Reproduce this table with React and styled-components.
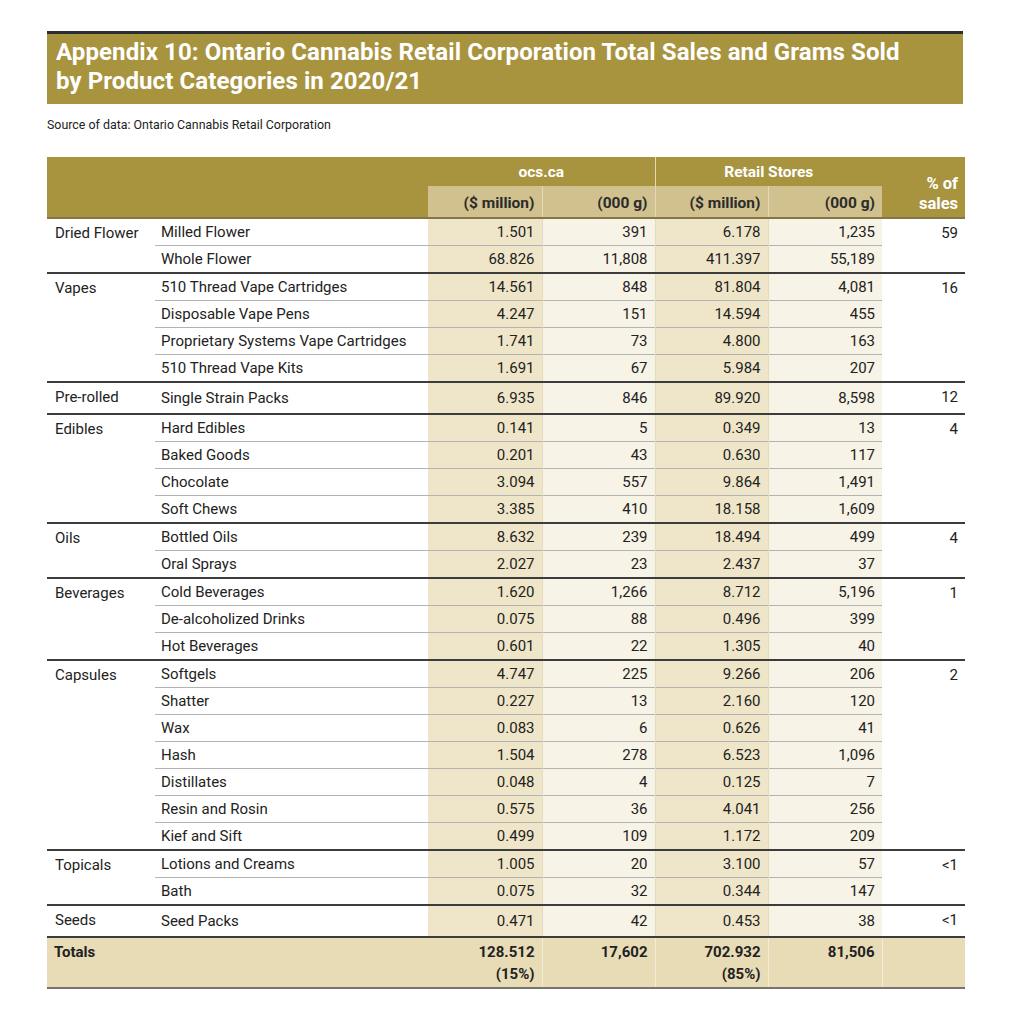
import React from 'react';
import styled, { createGlobalStyle } from 'styled-components';

const GlobalStyle = createGlobalStyle`
  body {
    margin: 0;
    background: #fff;
    font-family: "Roboto", "Liberation Sans", sans-serif;
    color: #222;
  }
`;

const Page = styled.div`
  width: 918px;
  padding: 31px 0 30px 47px;
`;

const TitleBand = styled.div`
  border-top: 3px solid #2b2e30;
  background: #a8943f;
  padding: 4px 9px 8px;
  margin-right: 2px;
  h1 {
    margin: 0;
    color: #fff;
    font-size: 24px;
    line-height: 29px;
    font-weight: 700;
    letter-spacing: 0.1px;
  }
`;

const Source = styled.p`
  margin: 13px 0 24px;
  font-size: 12.4px;
  line-height: 16px;
  color: #222;
`;

const Table = styled.table`
  width: 918px;
  border-collapse: collapse;
  table-layout: fixed;
  font-size: 15px;
`;

const HeadCell = styled.th`
  background: ${(p) => (p.$sub ? '#d0c18f' : '#a8943f')};
  color: ${(p) => (p.$sub ? '#2b2b2b' : '#fff')};
  font-weight: 700;
  font-size: ${(p) => (p.$big ? '16.5px' : '15.5px')};
  height: 29px;
  padding: ${(p) => (p.$big ? '0 7px 3px' : p.$sub ? '2px 7px 0' : '0 7px')};
  text-align: ${(p) => p.$align || 'right'};
  vertical-align: ${(p) => p.$valign || 'middle'};
  line-height: 20px;
  border-left: ${(p) => (p.$divider ? '1px solid #e4d9b6' : 'none')};
  border-bottom: ${(p) => (p.$last ? '2px solid #857648' : 'none')};
`;

const Cell = styled.td`
  height: 26px;
  padding: 0 7px;
  line-height: 20px;
  white-space: nowrap;
  text-align: ${(p) => (p.$num ? 'right' : 'left')};
  vertical-align: ${(p) => (p.$top ? 'top' : 'middle')};
  padding-top: ${(p) => (p.$top ? '4px' : '0')};
  background: ${(p) => p.$bg || 'transparent'};
  border-left: ${(p) => (p.$divider ? '1px solid #e4dabd' : 'none')};
  border-top: ${(p) => (p.$group ? '2px solid #3c3c3c' : p.$inner ? '1px solid #b3b3b3' : 'none')};
`;

const CatCell = styled(Cell)`
  padding-left: 8px;
`;

const ProductCell = styled(Cell)`
  padding-left: 6px;
`;

const TotalCell = styled.td`
  background: #e8dcb7;
  font-weight: 700;
  height: 41px;
  padding: 3px 7px 2px;
  line-height: 22px;
  vertical-align: top;
  text-align: ${(p) => (p.$num ? 'right' : 'left')};
  border-top: 2px solid #3c3c3c;
  border-bottom: 2px solid #77746c;
  border-left: ${(p) => (p.$divider ? '1px solid #f3ecd7' : 'none')};
`;

const MONEY = '#efe6c9';
const GRAMS = '#f7f3e6';

const groups = [
  ['Dried Flower', '59', [
    ['Milled Flower', '1.501', '391', '6.178', '1,235'],
    ['Whole Flower', '68.826', '11,808', '411.397', '55,189'],
  ]],
  ['Vapes', '16', [
    ['510 Thread Vape Cartridges', '14.561', '848', '81.804', '4,081'],
    ['Disposable Vape Pens', '4.247', '151', '14.594', '455'],
    ['Proprietary Systems Vape Cartridges', '1.741', '73', '4.800', '163'],
    ['510 Thread Vape Kits', '1.691', '67', '5.984', '207'],
  ]],
  ['Pre-rolled', '12', [
    ['Single Strain Packs', '6.935', '846', '89.920', '8,598'],
  ]],
  ['Edibles', '4', [
    ['Hard Edibles', '0.141', '5', '0.349', '13'],
    ['Baked Goods', '0.201', '43', '0.630', '117'],
    ['Chocolate', '3.094', '557', '9.864', '1,491'],
    ['Soft Chews', '3.385', '410', '18.158', '1,609'],
  ]],
  ['Oils', '4', [
    ['Bottled Oils', '8.632', '239', '18.494', '499'],
    ['Oral Sprays', '2.027', '23', '2.437', '37'],
  ]],
  ['Beverages', '1', [
    ['Cold Beverages', '1.620', '1,266', '8.712', '5,196'],
    ['De-alcoholized Drinks', '0.075', '88', '0.496', '399'],
    ['Hot Beverages', '0.601', '22', '1.305', '40'],
  ]],
  ['Capsules', '2', [
    ['Softgels', '4.747', '225', '9.266', '206'],
    ['Shatter', '0.227', '13', '2.160', '120'],
    ['Wax', '0.083', '6', '0.626', '41'],
    ['Hash', '1.504', '278', '6.523', '1,096'],
    ['Distillates', '0.048', '4', '0.125', '7'],
    ['Resin and Rosin', '0.575', '36', '4.041', '256'],
    ['Kief and Sift', '0.499', '109', '1.172', '209'],
  ]],
  ['Topicals', '<1', [
    ['Lotions and Creams', '1.005', '20', '3.100', '57'],
    ['Bath', '0.075', '32', '0.344', '147'],
  ]],
  ['Seeds', '<1', [
    ['Seed Packs', '0.471', '42', '0.453', '38'],
  ]],
];

const bgFor = (i) => (i % 2 === 0 ? MONEY : GRAMS);

const GroupRows = ({ name, share, rows, first }) =>
  rows.map((r, i) => {
    const group = i === 0 && !first;
    const inner = i > 0;
    return (
      <tr key={r[0]}>
        {i === 0 && (
          <CatCell rowSpan={rows.length} $top $group={group}>
            {name}
          </CatCell>
        )}
        <ProductCell $group={group} $inner={inner}>{r[0]}</ProductCell>
        {r.slice(1).map((v, j) => (
          <Cell key={j} $num $bg={bgFor(j)} $divider={j > 0} $group={group} $inner={inner}>
            {v}
          </Cell>
        ))}
        {i === 0 && (
          <Cell rowSpan={rows.length} $num $top $group={group}>
            {share}
          </Cell>
        )}
      </tr>
    );
  });

export default function App() {
  return (
    <Page>
      <GlobalStyle />
      <TitleBand>
        <h1>
          Appendix 10: Ontario Cannabis Retail Corporation Total Sales and Grams Sold
          <br />
          by Product Categories in 2020/21
        </h1>
      </TitleBand>
      <Source>Source of data: Ontario Cannabis Retail Corporation</Source>
      <Table>
        <colgroup>
          <col style={{ width: 108 }} />
          <col style={{ width: 273 }} />
          <col style={{ width: 114 }} />
          <col style={{ width: 113 }} />
          <col style={{ width: 113 }} />
          <col style={{ width: 114 }} />
          <col style={{ width: 83 }} />
        </colgroup>
        <thead>
          <tr>
            <HeadCell colSpan={2} rowSpan={2} $last />
            <HeadCell colSpan={2} $align="center">ocs.ca</HeadCell>
            <HeadCell colSpan={2} $align="center" $divider>Retail Stores</HeadCell>
            <HeadCell rowSpan={2} $valign="bottom" $big $last>
              % of
              <br />
              sales
            </HeadCell>
          </tr>
          <tr>
            <HeadCell $sub $last>($ million)</HeadCell>
            <HeadCell $sub $divider $last>(000 g)</HeadCell>
            <HeadCell $sub $divider $last>($ million)</HeadCell>
            <HeadCell $sub $divider $last>(000 g)</HeadCell>
          </tr>
        </thead>
        <tbody>
          {groups.map(([name, share, rows], gi) => (
            <GroupRows key={name} name={name} share={share} rows={rows} first={gi === 0} />
          ))}
          <tr>
            <TotalCell colSpan={2}>Totals</TotalCell>
            <TotalCell $num>
              128.512
              <br />
              (15%)
            </TotalCell>
            <TotalCell $num $divider>17,602</TotalCell>
            <TotalCell $num $divider>
              702.932
              <br />
              (85%)
            </TotalCell>
            <TotalCell $num $divider>81,506</TotalCell>
            <TotalCell $divider />
          </tr>
        </tbody>
      </Table>
    </Page>
  );
}
